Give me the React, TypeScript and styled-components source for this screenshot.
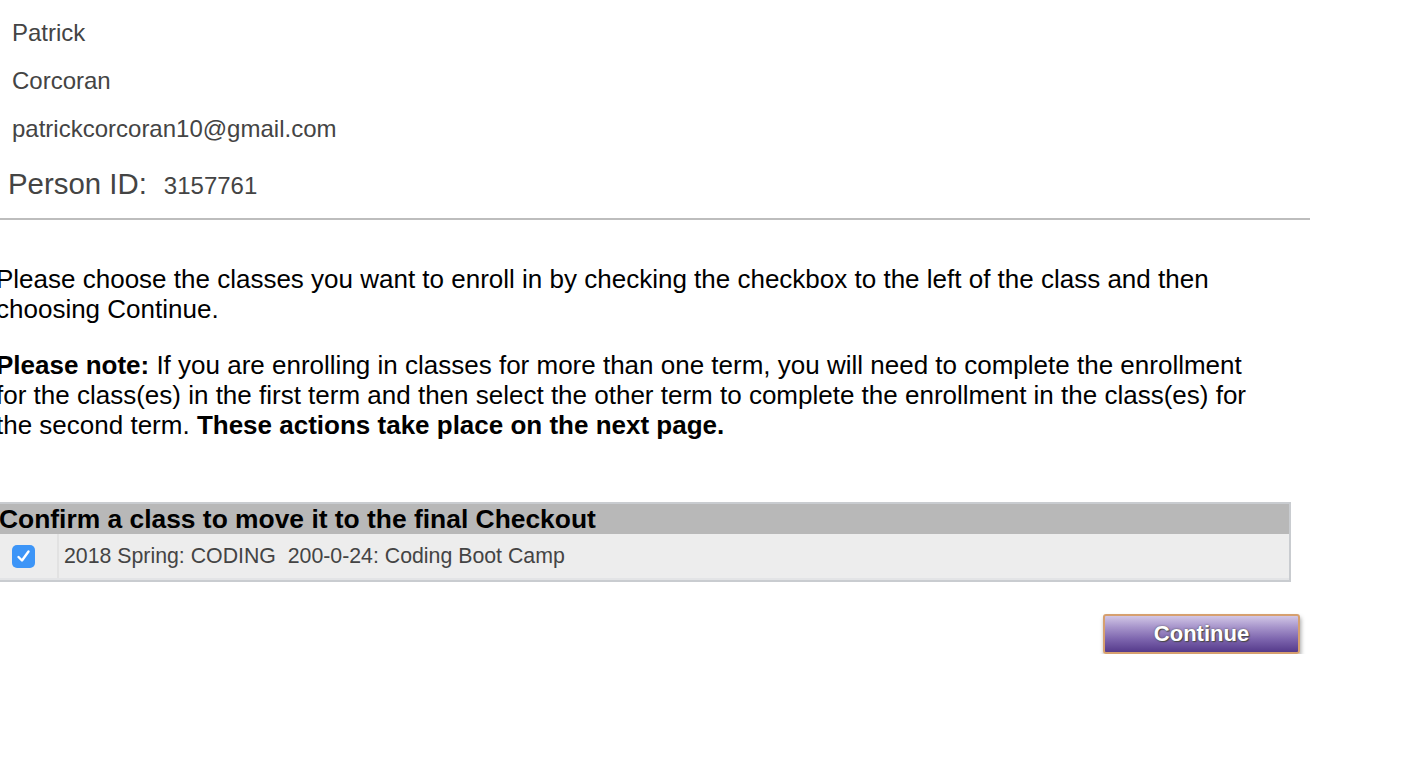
import React from "react";
import styled, { createGlobalStyle } from "styled-components";

const Global = createGlobalStyle`
  html, body { margin: 0; padding: 0; background: #fff; }
  body { font-family: "Liberation Sans", Arial, Helvetica, sans-serif; overflow: hidden; }
`;

const Page = styled.div`
  width: 1310px;
  display: flex;
  flex-direction: column;
`;

const Profile = styled.div`
  padding-top: 9px;
  display: flex;
  flex-direction: column;
`;

const InfoLine = styled.div`
  padding-left: 12px;
  font-size: 24px;
  line-height: 48px;
  color: #444;
`;

const IdRow = styled.div`
  margin-top: 13px;
  padding-left: 8px;
  display: flex;
  align-items: center;
  height: 36px;
  color: #444;
`;

const IdLabel = styled.span`
  font-size: 29.4px;
  line-height: 36px;
  margin-right: 17px;
`;

const IdValue = styled.span`
  font-size: 24px;
  line-height: 36px;
  padding-top: 3px;
`;

const Rule = styled.div`
  margin-top: 16px;
  height: 2px;
  background: #bdbdbd;
`;

const Main = styled.div`
  margin-left: -4px;
  display: flex;
  flex-direction: column;
`;

const Para = styled.p<{ $top: number }>`
  margin: ${(p) => p.$top}px 0 0;
  width: 1262px;
  font-size: 26px;
  line-height: 30px;
  color: #000;
`;

const Table = styled.div`
  margin-top: 62px;
  width: 1293px;
  border: 2px solid #c9ccd0;
  border-left: none;
  display: flex;
  flex-direction: column;
`;

const Header = styled.div`
  height: 30px;
  background: #b8b8b8;
  font-weight: bold;
  font-size: 26.4px;
  line-height: 30px;
  color: #000;
  padding-left: 3px;
  white-space: nowrap;
`;

const Row = styled.div`
  height: 44px;
  display: flex;
  background: #ededed;
  border-bottom: 2px solid #e3e4e6;
`;

const CheckCell = styled.div`
  width: 63px;
  flex: none;
  display: flex;
  align-items: center;
  padding-left: 16px;
  box-sizing: border-box;
  border-right: 2px solid #e2e2e2;
`;

const CheckBox = styled.div`
  width: 23px;
  height: 23px;
  border-radius: 5px;
  background: #3d95f7;
  display: flex;
  align-items: center;
  justify-content: center;
`;

const ClassCell = styled.div`
  padding-left: 5px;
  display: flex;
  align-items: center;
  font-size: 21.3px;
  color: #444;
  white-space: pre;
`;

const ButtonBar = styled.div`
  margin-top: 32px;
  width: 1304px;
  display: flex;
  justify-content: flex-end;
`;

const ContinueButton = styled.button`
  width: 197px;
  height: 40px;
  box-sizing: border-box;
  border: 2px solid #d6a06f;
  border-radius: 3px;
  background: linear-gradient(#d2c7e6 0%, #a896cc 30%, #7c64ad 65%, #553a8b 100%);
  box-shadow: 1px 3px 4px rgba(0, 0, 0, 0.35);
  color: #fff;
  font-family: "Liberation Sans", Arial, Helvetica, sans-serif;
  font-weight: bold;
  font-size: 22px;
  text-shadow: 0 0 2px #555, 1px 1px 1px #444;
  padding: 0;
  cursor: pointer;
`;

export default function App() {
  return (
    <>
      <Global />
      <Page>
        <Profile>
          <InfoLine>Patrick</InfoLine>
          <InfoLine>Corcoran</InfoLine>
          <InfoLine>patrickcorcoran10@gmail.com</InfoLine>
          <IdRow>
            <IdLabel>Person ID:</IdLabel>
            <IdValue>3157761</IdValue>
          </IdRow>
        </Profile>
        <Rule />
        <Main>
          <Para $top={44}>
            Please choose the classes you want to enroll in by checking the checkbox to the left of the class and then
            choosing Continue.
          </Para>
          <Para $top={26}>
            <b>Please note:</b> If you are enrolling in classes for more than one term, you will need to complete the
            enrollment for the class(es) in the first term and then select the other term to complete the enrollment in
            the class(es) for the second term. <b>These actions take place on the next page.</b>
          </Para>
          <Table>
            <Header>Confirm a class to move it to the final Checkout</Header>
            <Row>
              <CheckCell>
                <CheckBox>
                  <svg width="23" height="23" viewBox="0 0 23 23">
                    <path d="M6.5 12 L10 15.5 L16.5 6.5" fill="none" stroke="#fff" strokeWidth="2.4" strokeLinecap="round" strokeLinejoin="round" />
                  </svg>
                </CheckBox>
              </CheckCell>
              <ClassCell>2018 Spring: CODING  200-0-24: Coding Boot Camp</ClassCell>
            </Row>
          </Table>
          <ButtonBar>
            <ContinueButton>Continue</ContinueButton>
          </ButtonBar>
        </Main>
      </Page>
    </>
  );
}
